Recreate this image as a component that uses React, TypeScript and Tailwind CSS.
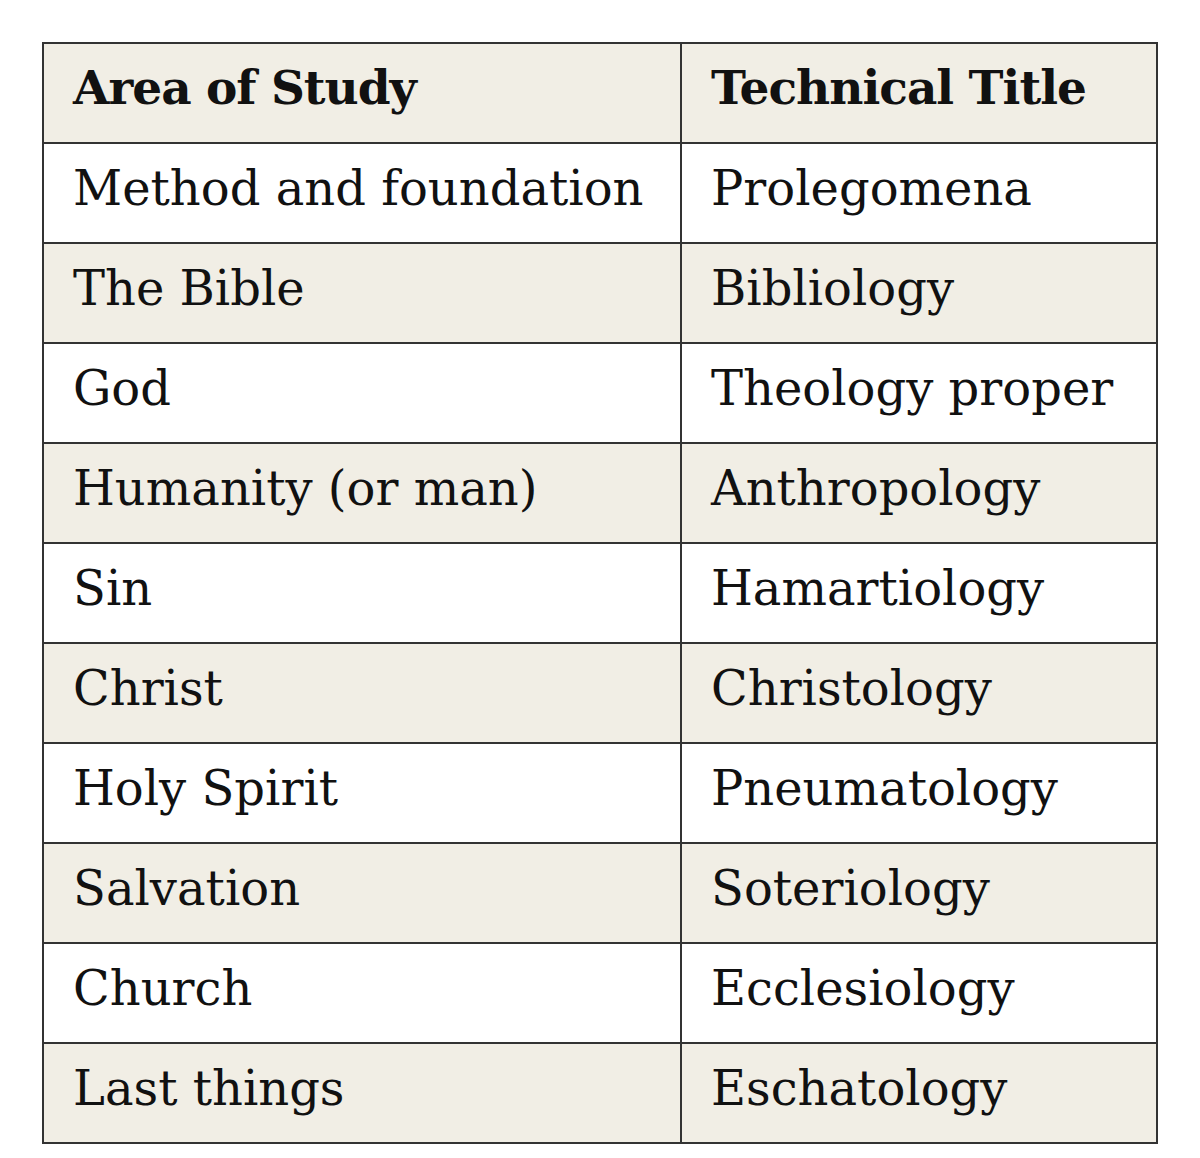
const rows: [string, string][] = [
  ["Method and foundation", "Prolegomena"],
  ["The Bible", "Bibliology"],
  ["God", "Theology proper"],
  ["Humanity (or man)", "Anthropology"],
  ["Sin", "Hamartiology"],
  ["Christ", "Christology"],
  ["Holy Spirit", "Pneumatology"],
  ["Salvation", "Soteriology"],
  ["Church", "Ecclesiology"],
  ["Last things", "Eschatology"],
];

export default function App() {
  return (
    <div className="min-h-[1158px] w-[1200px] bg-white pt-[42px] pl-[42px] font-['DejaVu_Serif',serif] text-[#111]">
      <table className="w-[1116px] table-fixed border-collapse border-2 border-[#333]">
        <colgroup>
          <col className="w-[638px]" />
          <col />
        </colgroup>
        <thead>
          <tr className="h-[100px] bg-[#f1eee5]">
            <th className="border-2 border-[#333] pb-[10px] pl-[29px] text-left text-[47px] font-bold tracking-[-1px]">
              Area of Study
            </th>
            <th className="border-2 border-[#333] pb-[10px] pl-[29px] text-left text-[47px] font-bold tracking-[-1px]">
              Technical Title
            </th>
          </tr>
        </thead>
        <tbody>
          {rows.map(([area, title], i) => (
            <tr key={area} className={i % 2 === 1 ? "h-[100px] bg-[#f1eee5]" : "h-[100px] bg-white"}>
              <td className="border-2 border-[#333] pb-[10px] pl-[29px] text-[48px]">{area}</td>
              <td className="border-2 border-[#333] pb-[10px] pl-[29px] text-[48px]">{title}</td>
            </tr>
          ))}
        </tbody>
      </table>
    </div>
  );
}
